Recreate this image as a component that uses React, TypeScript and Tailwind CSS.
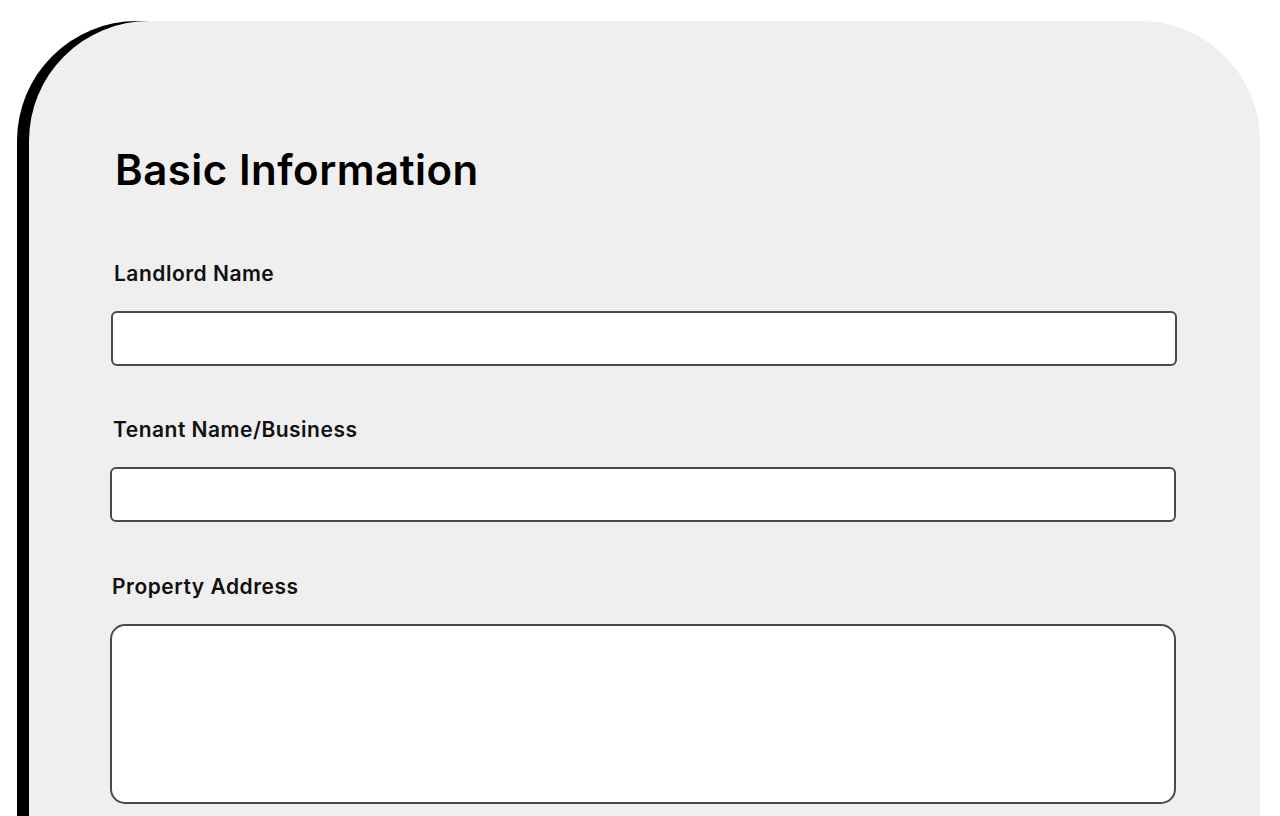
import React from "react";

export default function App() {
  return (
    <div className="min-h-[816px] bg-white overflow-hidden pt-[21px] pl-[29px] pr-[20px]" style={{ fontFamily: "Inter, 'Noto Sans', sans-serif" }}>
      <div className="bg-[#efefef] rounded-t-[120px] shadow-[-12px_0_0_0_#000] min-h-[900px] pt-[128px] pl-[82px] pr-[83px]">
        <h1 className="text-[42px] leading-[42px] font-semibold text-black tracking-[0.5px] ml-[4px]">Basic Information</h1>

        <label className="block mt-[73px] text-[21px] leading-[20px] font-semibold text-[#111] tracking-[0.5px] ml-[3px]">Landlord Name</label>
        <input className="block mt-[27px] w-full h-[55px] bg-white border-2 border-[#4a4a4a] rounded-[6px] outline-none px-3" />

        <label className="block mt-[54px] text-[21px] leading-[20px] font-semibold text-[#111] tracking-[0.5px] ml-[2px]">Tenant Name/Business</label>
        <input className="block mt-[27px] w-full h-[55px] bg-white border-2 border-[#4a4a4a] rounded-[6px] outline-none px-3 -ml-[1px]" />

        <label className="block mt-[55px] text-[21px] leading-[20px] font-semibold text-[#111] tracking-[0.5px] ml-[1px]">Property Address</label>
        <textarea className="block mt-[27px] w-full h-[180px] bg-white border-2 border-[#4a4a4a] rounded-[15px] outline-none resize-none p-3 -ml-[1px]" />
      </div>
    </div>
  );
}
